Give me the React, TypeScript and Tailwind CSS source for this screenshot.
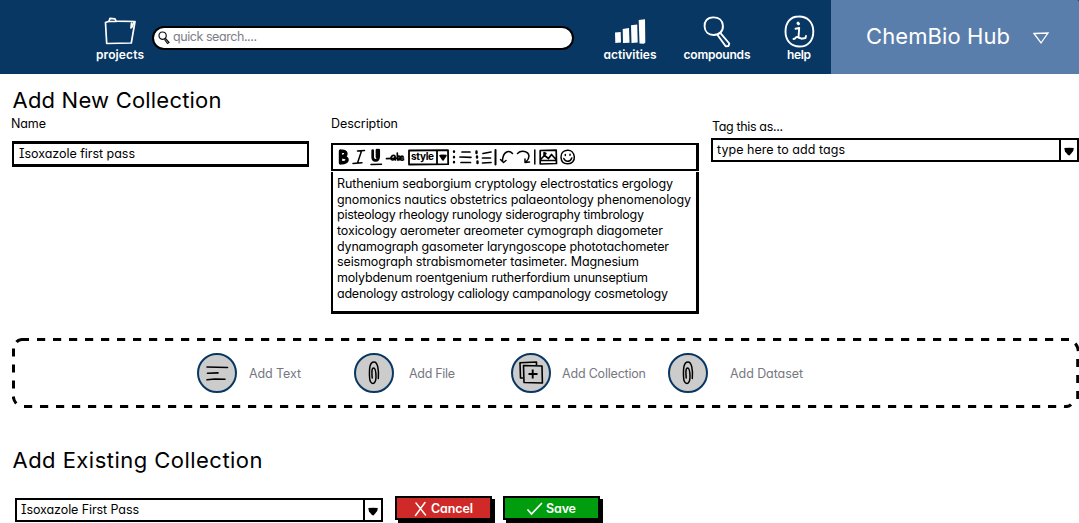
import { useLayoutEffect, useRef, type ReactNode } from 'react';

/** One line of text whose tracking is adjusted so that it fills the given width. */
function Fit({ w, children, className = '' }: { w: number; children: string; className?: string }) {
  const ref = useRef<HTMLSpanElement>(null);
  useLayoutEffect(() => {
    const el = ref.current;
    if (!el) return;
    el.style.letterSpacing = '0px';
    const natural = el.getBoundingClientRect().width;
    el.style.letterSpacing = `${(w - natural) / (children.length - 1)}px`;
  }, [w, children]);
  return (
    <div className={`shrink-0 whitespace-pre ${className}`} style={{ width: w }}>
      <span ref={ref}>{children}</span>
    </div>
  );
}

function NavItem({ label, w, icon, className }: { label: string; w: number; icon: ReactNode; className: string }) {
  return (
    <a className={`flex flex-col items-center pt-[15px] ${className}`}>
      <div className="flex h-[33px] items-center justify-center">{icon}</div>
      <Fit w={w} className="text-[12px] leading-[14px] font-semibold">{label}</Fit>
    </a>
  );
}

const FolderIcon = () => (
  <svg className="-mt-[2px]" width="32" height="28" viewBox="0 0 32 28" fill="none" stroke="#fff" strokeWidth="1.7" strokeLinejoin="round" strokeLinecap="round">
    <path d="M1.500 5.500 2.700 26.500 27.300 26 31 4.500 12 4.200 11 1.800 6 1.300 5 4.300Z" />
    <path d="M5 4.500h7M27.500 6l-.5 5M30 5l-2 5" />
  </svg>
);

const BarsIcon = () => (
  <svg className="-mt-[2px]" width="32" height="26" viewBox="0 0 32 26" fill="#fff">
    <path d="M1 14.500 6.700 14 7 24.500 1.300 25ZM8.700 11 15 10 15.500 24.700 9 25ZM17 7.300 23.200 6.500 23.700 24.500 17.500 25ZM24.700 2 31 1.300 31.300 24.500 30 25.700 25.500 25.500Z" />
  </svg>
);

const LensIcon = () => (
  <svg width="28" height="32" viewBox="0 0 28 32" fill="none" stroke="#fff" strokeWidth="1.9" strokeLinejoin="round">
    <path d="M10 1.400C4 1.600 1.300 5.500 1.600 10.500c.2 5.500 4 8.600 9.200 8.500 5.800-.1 9.500-4 9.100-9.500C19.500 4.500 16 1.200 10 1.400Z" />
    <path d="M14.500 19 22.700 30.300 25.500 30 26.300 27.500 17.500 17.200" />
  </svg>
);

const InfoIcon = () => (
  <svg width="31" height="33" viewBox="0 0 31 33" fill="none" stroke="#fff" strokeWidth="1.900" strokeLinecap="round" strokeLinejoin="round">
    <path d="M14.500 1.500C6.500 1.500 1.500 7.500 1.500 16.500S7 31.500 15.500 31.500 29.500 25.500 29.300 16C29 7 23.500 1.300 14.500 1.500Z" />
    <path d="M14 8.200l.5.5" strokeWidth="3" />
    <path d="M11.500 13.800l3.700-.8-.7 9.500c-1.500-.8-3 .2-3.500 1l-1.500.5M14.500 22.500l3 1.200 4-.7.500-2" strokeWidth="1.900" />
  </svg>
);

const DropMark = () => (
  <svg width="10" height="9" viewBox="0 0 10 9"><path d="M.3 1 5 .7 9.800 1 9.200 4 5.500 8.500 4 8 1 4.500Z" /></svg>
);

function Select({ value, w, className }: { value: string; w: number; className: string }) {
  return (
    <div className={`flex border-2 border-black bg-white ${className}`}>
      <div className="flex-1 pt-px pl-[4px]">
        <Fit w={w} className="text-[12.500px] leading-[18px]">{value}</Fit>
      </div>
      <div className="flex w-[18px] items-center justify-center border-l-2 border-black pt-[2px]">
        <DropMark />
      </div>
    </div>
  );
}

const ToolbarIcons = () => (
  <svg width="240" height="18" viewBox="337 148 240 18" fill="none" stroke="#000" strokeWidth="1.500" strokeLinecap="round" strokeLinejoin="round">
    <path d="M340.500 151v12M340.500 151.500c7-1.500 7 4 1.500 5.500 7.500-.5 6.500 6.500-1 5.700" strokeWidth="3.400" />
    <path d="M357.500 151l7-.5M353 163.500l9-.8M361.500 151l-4 12" />
    <path d="M372.700 150.500v7c.5 4 5.500 4 6-1V150M377 157v-7" strokeWidth="2.700" />
    <path d="M371 164.500l10.500-.3" />
    <path d="M386.500 158.700l17-.7" strokeWidth="1.700" />
    <path d="M394.500 155.500c-3-1-5 4-2 4.500 2 0 2.500-2 2.500-4l.3 4M397.300 153l.2 7c4 0 4-5 .3-3.500M403 156.500c-3-1.500-4 3.500-1 3.700l1.500-.5" strokeWidth="1.700" />
    <path d="M409 150.500l39-.3.200 14-39.200.3ZM437 150.500v13.500" strokeWidth="1.800" />
    <path d="M440 155.500l3-.3 3 .3-3 4.500Z" fill="#000" />
    <path d="M454 151.500v.3M454 157v.3M454 162v.3" strokeWidth="2.400" />
    <path d="M462 152h8M460 157l11 .3M461 162.500h9.500" strokeWidth="1.700" />
    <path d="M476.500 151.500v1.500M477 156.500v1M477.500 161.500v1.500" strokeWidth="2.400" />
    <path d="M483 153.500l8-1.500M482.500 158h8M482.500 163l8.500-.5" strokeWidth="1.700" />
    <path d="M495.500 150v14.500" strokeWidth="2" />
    <path d="M512.500 153.500c-3.500-4-10-2-10 8M500.500 159.500l3 3 2.500-2M517.500 153.500c4-4 11-2 11.500 2.500 0 3-1.500 4.500-3 6M529.500 162l-4.500.5v-3.500" />
    <path d="M534.800 150v14" />
    <path d="M540.200 150.500l16-.3.300 13.300-16.300.5ZM540.500 159.500l4-4 4 3 3-4 4.500 5M540.500 160.500h15.500" strokeWidth="1.700" />
    <path d="M544 152.500l2 1-2 2Z" />
    <path d="M567.500 150.200c-4.500.3-6.700 3.500-6.500 7.300.3 4 3 6.500 7 6.300 4-.2 6.700-3 6.300-7-.4-4-3-6.800-6.800-6.600Z" />
    <path d="M565.300 154.500v1M570 154.300v1M563.800 158.500c2 4 6.500 3.500 8-.5" />
  </svg>
);

function Circle({ children }: { children: ReactNode }) {
  return (
    <div className="flex size-[40px] shrink-0 items-center justify-center rounded-full border-2 border-[#083763] bg-[#cccccc]">
      {children}
    </div>
  );
}

const LinesIcon = () => (
  <svg width="24" height="20" viewBox="0 0 24 20" fill="none" stroke="#000" strokeWidth="1.600" strokeLinecap="round">
    <path d="M2 4l20.500.5M2.500 10.200l10.500-.3M2 16.800l8-.8 10 .3" />
  </svg>
);

const ClipIcon = () => (
  <svg width="14" height="26" viewBox="0 0 14 26" fill="none" stroke="#000" strokeWidth="1.500" strokeLinecap="round">
    <path d="M11.300 18.500C12 9 10.500 2 7 2 2.500 2 2.300 9 2.500 16c.2 10 6.500 9.500 6.500 1 0-5-.5-9-2.500-9S4.800 13 5.200 18" />
  </svg>
);

const CollectionIcon = () => (
  <svg width="26" height="26" viewBox="0 0 26 26" fill="none" stroke="#000" strokeWidth="1.600" strokeLinejoin="round">
    <path d="M5 18H2.500L2 2.800 18.500 2v3" />
    <path d="M5.500 5.500l18.500.5.400 17-18.400-.5Z" />
    <path d="M14.700 9.500v9M10.500 14h9" strokeWidth="1.900" />
  </svg>
);

const DropOutline = () => (
  <svg className="absolute inset-0" width="1067" height="70" viewBox="12 338 1067 70" fill="none" stroke="#000" strokeWidth="3">
    <path d="M16.500 342q1.500-2 5-2.500h7.500" />
    <path d="M37 339.500H1069" strokeDasharray="8.200 7.800" />
    <path d="M24 406.500H1063" strokeDasharray="8.200 7.800" />
    <path d="M13.500 348.500v40" strokeDasharray="8 8" />
    <path d="M13.200 396.500q.5 4 3 7" />
    <path d="M1075.300 343.500q2.500 3 3 7.500M1064 406.500q5 .5 7-2" />
    <path d="M1077.700 359v41" strokeDasharray="8 8" />
  </svg>
);

const LINES: [string, number][] = [
  ['Ruthenium seaborgium cryptology electrostatics ergology', 336],
  ['gnomonics nautics obstetrics palaeontology phenomenology', 354],
  ['pisteology rheology runology siderography timbrology', 307],
  ['toxicology aerometer areometer cymograph diagometer', 326],
  ['dynamograph gasometer laryngoscope phototachometer', 332],
  ['seismograph strabismometer tasimeter. Magnesium', 302],
  ['molybdenum roentgenium rutherfordium ununseptium', 311],
  ['adenology astrology caliology campanology cosmetology', 331],
];

export default function App() {
  return (
    <div className="h-[523px] w-[1079px] overflow-hidden bg-white font-['Inter',sans-serif] text-[12.500px] text-black [font-feature-settings:'cv11','cv08']">
      <header className="flex h-[74px] bg-[#083763] text-white">
        <NavItem label="projects" w={48} icon={<FolderIcon />} className="ml-[90px] w-[60px]" />
        <div className="mt-[26px] ml-[2px] flex h-[24px] w-[422px] rounded-full border-2 border-black bg-white pl-[4px] text-[#7d7d86]">
          <svg className="mt-[3px] mr-[3px]" width="12" height="14" viewBox="0 0 12 14" fill="none" stroke="#111">
            <path d="M4.500 1C2 1 .8 3 1 5c.2 2.300 2 3.500 4 3.300 2.300-.2 3.500-2 3.200-4C8 2 6.500 1 4.500 1ZM6.500 8.500l3 4 1.500-1-3.500-4" strokeWidth="1.200" />
          </svg>
          <Fit w={84} className="leading-[18px]">quick search....</Fit>
        </div>
        <NavItem label="activities" w={53} icon={<BarsIcon />} className="ml-[26px] w-[60px]" />
        <NavItem label="compounds" w={67} icon={<LensIcon />} className="ml-[17px] w-[80px]" />
        <NavItem label="help" w={24} icon={<InfoIcon />} className="ml-[22px] w-[40px]" />
        <div className="ml-auto flex w-[248px] items-center rounded-tr-[2px] bg-[#5a7eab] pl-[35px]">
          <Fit w={144} className="-mt-[3px] text-[22px] leading-[28px]">ChemBio Hub</Fit>
          <svg className="mt-[2px] ml-[22px]" width="18" height="14" viewBox="0 0 18 14" fill="none" stroke="#fff" strokeWidth="1.300">
            <path d="M2 2.500 16 2 9 12Z" />
          </svg>
        </div>
      </header>

      <h1 className="pt-[12px] pl-[12.500px]">
        <Fit w={209} className="text-[22px] leading-[28px]">Add New Collection</Fit>
      </h1>

      <section className="flex h-[224px] items-start">
        <div className="ml-[11px] w-[298px] pt-[2px]">
          <Fit w={35} className="leading-[16px]">Name</Fit>
          <div className="mt-[9px] ml-px h-[26px] w-[297px] border-2 border-t-[3px] border-b-[3px] border-black pl-[5px]">
            <Fit w={116} className="leading-[19px]">Isoxazole first pass</Fit>
          </div>
        </div>
        <div className="ml-[22px] w-[368px] pt-[2px]">
          <Fit w={67} className="leading-[16px]">Description</Fit>
          <div className="mt-[11px] flex h-[28px] items-center border-2 border-r-[3px] border-black pl-[4px]">
            <div className="relative">
              <ToolbarIcons />
              <Fit w={23} className="absolute top-[2px] left-[74px] text-[10px] leading-[12px] font-bold">style</Fit>
            </div>
          </div>
          <div className="mt-px h-[142px] border-2 border-t-0 border-r-[3px] border-b-[3px] border-black pt-[4px] pl-[4px]">
            {LINES.map(([line, w]) => (
              <Fit key={line} w={w} className="h-[15.700px] leading-[16px]">{line}</Fit>
            ))}
          </div>
        </div>
        <div className="ml-[12px] w-[368px] pt-[5px]">
          <Fit w={71} className="pl-px leading-[16px]">Tag this as...</Fit>
          <Select value="type here to add tags" w={128} className="mt-[3px] h-[24px]" />
        </div>
      </section>

      <section className="relative ml-[12px] flex h-[70px] w-[1067px] items-center pl-[185px] text-[#77777f]">
        <DropOutline />
        <Circle><LinesIcon /></Circle>
        <Fit w={52} className="mt-[2px] ml-[12px]">Add Text</Fit>
        <div className="ml-[53px]"><Circle><ClipIcon /></Circle></div>
        <Fit w={46} className="mt-[2px] ml-[15px]">Add File</Fit>
        <div className="ml-[56px]"><Circle><CollectionIcon /></Circle></div>
        <Fit w={84} className="mt-[2px] ml-[11px]">Add Collection</Fit>
        <div className="ml-[22px]"><Circle><ClipIcon /></Circle></div>
        <Fit w={73} className="mt-[2px] ml-[22px]">Add Dataset</Fit>
      </section>

      <h2 className="pt-[38px] pl-[12.500px]">
        <Fit w={250} className="text-[22px] leading-[28px]">Add Existing Collection</Fit>
      </h2>

      <section className="flex items-start pt-[22px] pl-[15px]">
        <Select value="Isoxazole First Pass" w={118} className="mt-[2px] h-[24px] w-[368px]" />
        <button className="ml-[12px] flex h-[24px] w-[97px] items-center border-2 border-black bg-[#cf2a27] pl-[17px] text-white shadow-[3px_3px_0_#000]">
          <svg className="mt-px" width="13" height="16" viewBox="0 0 13 16" fill="none" stroke="#fff" strokeWidth="1.500" strokeLinecap="round"><path d="M2 2l9.500 12M11 1.500 1.500 14.500" /></svg>
          <Fit w={42} className="mt-[2px] ml-[4px] text-left font-semibold">Cancel</Fit>
        </button>
        <button className="ml-[11px] flex h-[24px] w-[97px] items-center border-2 border-black bg-[#009e0f] pl-[21px] text-white shadow-[3px_3px_0_#000]">
          <svg className="mt-px" width="17" height="14" viewBox="0 0 17 14" fill="none" stroke="#fff" strokeWidth="1.700" strokeLinecap="round"><path d="M2 8l3.500 4L15.500 1.500" /></svg>
          <Fit w={30} className="mt-[2px] ml-[3px] text-left font-semibold">Save</Fit>
        </button>
      </section>
    </div>
  );
}
